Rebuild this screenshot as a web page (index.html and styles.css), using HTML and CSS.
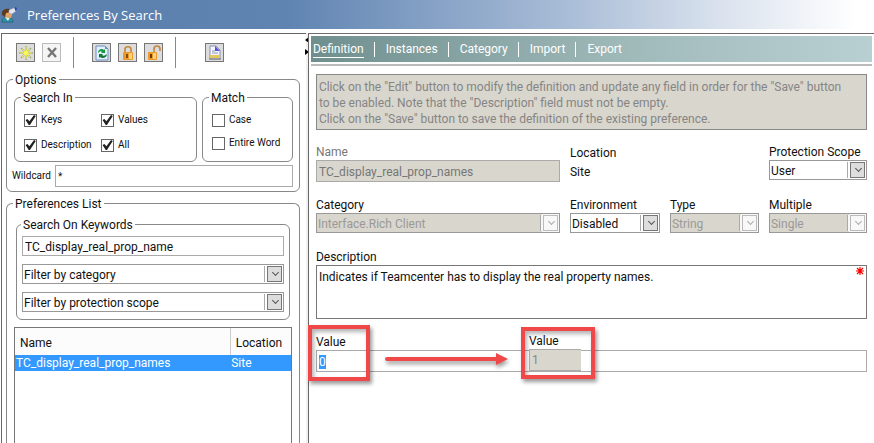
FILE: index.html
```html
<!DOCTYPE html>
<html lang="en">
<head>
    <meta charset="utf-8">
    <title>Preferences By Search</title>
    <link rel="stylesheet" href="styles.css">
</head>
<body>
    <header class="titlebar">
        <svg class="title-icon" width="16" height="16" viewBox="0 0 16 16">
            <path d="M1 15c0-4 2-5 5-5s6 1 6 5z" fill="#2c93a8" stroke="#1c5468" stroke-width=".6"/>
            <path d="M4 10l3 4 2-4z" fill="#e8f4f4"/>
            <path d="M3 5h7l1 3-1 3H6L3 8z" fill="#e0a565"/>
            <path d="M1 8c-1-5 3-7 8-6l1 3-5 1-1 4z" fill="#5d3a22"/>
            <path d="M8 3l5-2 2 3-4 3-3-1z" fill="#dfe6f2" stroke="#9aa9c4" stroke-width=".5"/>
            <path d="M14 0l2 1-1 3-1-1z" fill="#2b3cc0"/>
        </svg>
        <h1>Preferences By Search</h1>
    </header>

    <main class="workspace">
        <section class="sidebar">
            <div class="toolbar">
                <button class="tool" aria-label="New">
                    <svg width="16" height="16" viewBox="0 0 16 16">
                        <path d="M8 1v14M1 8h14M3 3l10 10M13 3L3 13" stroke="#a3ad78" stroke-width="1.5"/>
                        <path d="M8 2v12M2 8h12M4 4l8 8M12 4l-8 8" stroke="#f3ee3c" stroke-width="1"/>
                        <circle cx="8" cy="8" r="2.5" fill="#faf65a"/>
                    </svg>
                </button>
                <button class="tool off" aria-label="Delete" disabled>
                    <svg width="16" height="16" viewBox="0 0 16 16">
                        <path d="M4 3l8 9M12 3l-8 9" stroke="#777" stroke-width="2.4"/>
                    </svg>
                </button>
                <span class="sep"></span>
                <button class="tool" aria-label="Refresh">
                    <svg width="16" height="16" viewBox="0 0 16 16">
                        <path d="M2 1h9l3 3v11H2z" fill="#e4efff" stroke="#6d8fc6"/>
                        <path d="M11 1v3h3z" fill="#6d8fc6"/>
                        <path d="M4 8c0-4 4-5 6-3l1-1v4H7l1-1c-1-1-2-1-4 1z" fill="#169a3e"/>
                        <path d="M13 9c0 4-5 5-7 3l-1 1V9h4l-1 1c1 1 3 1 5-1z" fill="#107a30"/>
                    </svg>
                </button>
                <button class="tool" aria-label="Lock">
                    <svg width="16" height="16" viewBox="0 0 16 16">
                        <path d="M5 8V4c0-3 6-3 6 0v4" fill="none" stroke="#c4863a" stroke-width="1.6"/>
                        <rect x="3" y="7" width="10" height="8" rx="1" fill="#ee9a2a"/>
                        <path d="M9 8h3v6H9z" fill="#ffd27a"/>
                        <path d="M7 9v4" stroke="#5a3208" stroke-width="1.5"/>
                    </svg>
                </button>
                <button class="tool" aria-label="Unlock">
                    <svg width="16" height="16" viewBox="0 0 16 16">
                        <path d="M8 8V4c0-4 6-4 6 0v2" fill="none" stroke="#c4863a" stroke-width="1.6"/>
                        <rect x="2" y="7" width="9" height="8" rx="1" fill="#ee9a2a"/>
                        <path d="M7 8h3v6H7z" fill="#ffd27a"/>
                        <path d="M5 9v4" stroke="#5a3208" stroke-width="1.8"/>
                    </svg>
                </button>
                <span class="sep"></span>
                <button class="tool report" aria-label="Report">
                    <svg width="16" height="16" viewBox="0 0 16 16">
                        <path d="M3 1h6l4 4v9H3z" fill="#f4f6ff" stroke="#8490b8"/>
                        <path d="M8 1l5 5H8z" fill="#5a50d8"/>
                        <path d="M5 6h3M5 8h6" stroke="#9098b0"/>
                        <path d="M3 10h10v3H3z" fill="#e0c85c"/>
                        <path d="M2 14h12" stroke="#777"/>
                    </svg>
                </button>
            </div>

            <fieldset class="group options">
                <legend>Options</legend>
                <div class="option-groups">
                    <fieldset class="group search-in">
                        <legend>Search In</legend>
                        <label class="check"><input type="checkbox" checked>Keys</label>
                        <label class="check"><input type="checkbox" checked>Values</label>
                        <label class="check"><input type="checkbox" checked>Description</label>
                        <label class="check"><input type="checkbox" checked>All</label>
                    </fieldset>
                    <fieldset class="group match">
                        <legend>Match</legend>
                        <label class="check"><input type="checkbox">Case</label>
                        <label class="check"><input type="checkbox">Entire Word</label>
                    </fieldset>
                </div>
                <div class="wildcard">
                    <label for="wildcard">Wildcard</label>
                    <input type="text" class="box" id="wildcard" value="*">
                </div>
            </fieldset>

            <fieldset class="group list">
                <legend>Preferences List</legend>
                <fieldset class="group keywords">
                    <legend>Search On Keywords</legend>
                    <input type="text" class="box" aria-label="Search On Keywords" value="TC_display_real_prop_name">
                    <span class="select">
                        <select aria-label="Category filter"><option>Filter by category</option></select>
                    </span>
                    <span class="select">
                        <select aria-label="Protection scope filter"><option>Filter by protection scope</option></select>
                    </span>
                </fieldset>
                <div class="results">
                    <table>
                        <thead>
                            <tr><th class="col-name">Name</th><th>Location</th></tr>
                        </thead>
                        <tbody>
                            <tr class="selected"><td>TC_display_real_prop_names</td><td>Site</td></tr>
                        </tbody>
                    </table>
                </div>
            </fieldset>
        </section>

        <div class="splitter">
            <svg width="4" height="18" viewBox="0 0 4 18">
                <path d="M4 0v6L0 3zM0 12v6l4-3z" fill="#000"/>
            </svg>
        </div>

        <section class="detail">
            <nav class="tabs">
                <a href="#definition" class="active">Definition</a>
                <a href="#instances">Instances</a>
                <a href="#category">Category</a>
                <a href="#import">Import</a>
                <a href="#export">Export</a>
            </nav>
            <form class="form">
                <p class="info">Click on the "Edit" button to modify the definition and update any field in order for the "Save" button<br>to be enabled. Note that the "Description" field must not be empty.<br>Click on the "Save" button to save the definition of the existing preference.</p>

                <div class="fields">
                    <div class="field dim">
                        <label for="name">Name</label>
                        <input type="text" class="box" id="name" value="TC_display_real_prop_names" disabled>
                    </div>
                    <div class="field location">
                        <span>Location</span>
                        <span class="static">Site</span>
                    </div>
                    <div class="field scope">
                        <label for="scope">Protection Scope</label>
                        <span class="select"><select id="scope"><option>User</option></select></span>
                    </div>
                    <div class="field">
                        <label for="category">Category</label>
                        <span class="select off"><select id="category" disabled><option>Interface.Rich Client</option></select></span>
                    </div>
                    <div class="field">
                        <label for="environment">Environment</label>
                        <span class="select"><select id="environment"><option>Disabled</option></select></span>
                    </div>
                    <div class="field">
                        <label for="type">Type</label>
                        <span class="select off"><select id="type" disabled><option>String</option></select></span>
                    </div>
                    <div class="field">
                        <label for="multiple">Multiple</label>
                        <span class="select off"><select id="multiple" disabled><option>Single</option></select></span>
                    </div>
                </div>

                <div class="field description">
                    <label for="description">Description</label>
                    <textarea id="description">Indicates if Teamcenter has to display the real property names.</textarea>
                    <svg class="required" width="8" height="8" viewBox="0 0 8 8">
                        <path d="M4 0v8M0 4h8M1 1l6 6M7 1L1 7" stroke="#f00" stroke-width="1.2"/>
                    </svg>
                </div>

                <div class="field value">
                    <label for="value">Value</label>
                    <input type="text" class="box" id="value" value="0">
                    <div class="mark mark-old"></div>
                    <svg class="arrow" width="124" height="16" viewBox="0 0 124 16">
                        <path d="M2 8h112" stroke="#f04848" stroke-width="4" stroke-linecap="round"/>
                        <path d="M111 2l12 6-12 6z" fill="#f04848"/>
                    </svg>
                    <div class="mark mark-new">
                        <label for="new-value">Value</label>
                        <input type="text" id="new-value" value="1" disabled>
                    </div>
                </div>
            </form>
        </section>
    </main>

    <script>
        document.getElementById('value').select();
    </script>
</body>
</html>
```
FILE: styles.css
```css
* {
    box-sizing: border-box;
}
body {
    margin: 0;
    min-height: 100vh;
    display: flex;
    flex-direction: column;
    background: #fff;
    color: #111;
    font: 12px/16px Roboto, "Open Sans", sans-serif;
}
input, select, textarea, button {
    font: inherit;
    color: inherit;
    margin: 0;
    border-radius: 0;
    outline: none;
}

/* title bar */
.titlebar {
    display: flex;
    align-items: center;
    gap: 10px;
    height: 29px;
    margin-bottom: 4px;
    padding-left: 1px;
    background: linear-gradient(90deg, #5b7fac 0%, #6084b2 33%, #a9bdd7 65%, #dbe3ee 83%, #fff 98%);
}
.titlebar h1 {
    margin: 0;
    color: #fff;
    font-family: "Open Sans", sans-serif;
    font-size: 13px;
    font-weight: normal;
}

.workspace {
    flex: 1;
    display: grid;
    grid-template-columns: 35% 2px 1fr;
}

/* left side */
.sidebar {
    display: flex;
    flex-direction: column;
    margin-left: 1px;
    padding: 0 6px 0 4px;
    border-left: 1px solid #666;
    border-top: 1px solid #666;
}
.toolbar {
    display: flex;
    align-items: center;
    gap: 7px;
    height: 37px;
    padding-left: 10px;
}
.tool {
    width: 19px;
    height: 19px;
    padding: 0;
    border: 1px solid #777;
    background: #dcdcdc;
    display: flex;
    align-items: center;
    justify-content: center;
}
.tool.off {
    border-color: #bbb;
    background: #f5f5f5;
}
.tool.report {
    margin-left: 11px;
}
.sep {
    width: 1px;
    height: 31px;
    margin: 0 11px 0 5px;
    background: #888;
}
.group {
    min-width: 0;
    margin: 0;
    padding: 0;
    border: 1px solid #888;
    border-radius: 6px;
}
.group legend {
    margin-left: -1px;
    padding: 1px 2px 0;
}
.options {
    padding: 1px 6px 4px 7px;
}
.option-groups {
    display: grid;
    grid-template-columns: 183fr 91fr;
    gap: 5px;
}
.search-in, .match {
    height: 73px;
    display: grid;
    align-content: start;
    row-gap: 9px;
    padding: 6px 9px 0;
}
.match {
    row-gap: 7px;
}
.search-in {
    grid-template-columns: 77px 1fr;
}
.search-in legend, .match legend {
    margin-left: -3px;
}
.check {
    display: flex;
    align-items: center;
    gap: 4px;
    font-size: 10px;
    white-space: nowrap;
}
.check input {
    appearance: none;
    flex: none;
    width: 13px;
    height: 13px;
    border: 1px solid #666;
    background: #fff;
}
.check input:checked::after {
    content: "";
    display: block;
    width: 11px;
    height: 11px;
    background: #222;
    clip-path: polygon(5% 50%, 22% 40%, 40% 62%, 82% 5%, 98% 14%, 45% 95%, 34% 95%);
}
.box {
    width: 100%;
    height: 22px;
    padding: 1px 2px 0;
    border: 1px solid #aaa;
    background: #fff;
}
.wildcard {
    display: flex;
    align-items: center;
    gap: 4px;
    margin: 3px 0 0 -2px;
    font-size: 10px;
}
.list {
    flex: 1;
    display: flex;
    flex-direction: column;
    margin-top: 3px;
    padding: 4px 7px 0;
    border-bottom: 0;
    border-radius: 6px 6px 0 0;
}
.keywords {
    display: flex;
    flex-direction: column;
    gap: 8px;
    margin: 0 2px;
    padding: 3px 5px 7px;
}
.keywords .box, .keywords select {
    height: 20px;
}
.results {
    flex: 1;
    margin-top: 7px;
    border: 1px solid #777;
    border-bottom: 0;
}
.results table {
    width: 100%;
    border-collapse: collapse;
}
.results th {
    height: 27px;
    padding: 3px 5px 0;
    font-weight: normal;
    text-align: left;
    background: #fcfcfc;
}
.results th + th {
    border-left: 1px solid #ccc;
}
.results .col-name {
    width: 78%;
}
.results td {
    height: 16px;
    padding: 1px 1px 0;
    line-height: 15px;
}
.selected {
    background: #3399ff;
    color: #fff;
}

/* drop-downs */
.select {
    position: relative;
    display: block;
}
.select select {
    appearance: none;
    display: block;
    width: 100%;
    height: 20px;
    padding: 1px 18px 0 1px;
    border: 1px solid #999;
    background: #fff;
    opacity: 1;
}
.select::before {
    content: "";
    position: absolute;
    top: 2px;
    right: 2px;
    bottom: 2px;
    width: 13px;
    border: 1px solid #777;
    background: #ddd;
    box-shadow: -2px 0 #fff, -3px 0 #aaa;
    pointer-events: none;
}
.select::after {
    content: "";
    position: absolute;
    top: 6px;
    right: 6px;
    width: 4px;
    height: 4px;
    border: solid #555;
    border-width: 0 1px 1px 0;
    transform: rotate(45deg);
    pointer-events: none;
}
.select.off select {
    background: #d9d6cd;
    color: #999;
}
.select.off::before {
    background: #f8f8f8;
    border-color: #bbb;
    box-shadow: 0 0 0 1px #f8f8f8, -2px 0 #f8f8f8, -3px 0 #aaa;
}
.select.off::after {
    border-color: #aaa;
}

.splitter {
    background: #f0f0f0;
}
.splitter svg {
    display: block;
    margin: 4px 0 0 -1px;
}

/* right side */
.detail {
    min-width: 0;
    padding: 2px 2px 0;
    border-left: 1px solid #666;
    border-top: 1px solid #736b70;
}
.tabs {
    display: flex;
    align-items: center;
    height: 26px;
    padding: 1px 0 0 2px;
    background: linear-gradient(90deg, #6f8f8e, #9fb8b8 55%, #b9d0d3);
}
.tabs a {
    color: #fff;
    text-decoration: none;
    line-height: 15px;
}
.tabs a + a {
    margin-left: 10px;
    padding-left: 11px;
    border-left: 1px solid #fff;
}
.tabs .active {
    border-bottom: 1px solid #fff;
}
.form {
    margin-top: 2px;
    padding: 8px 5px 0;
    border-top: 2px solid #bbb;
}
.info {
    margin: 0;
    padding: 4px 2px 2px;
    border: 1px solid #888;
    background: #d9d6cd;
    color: #858585;
}
.fields {
    display: grid;
    grid-template-columns: 244fr 90fr 89fr 98fr;
    gap: 16px 10px;
    margin-top: 15px;
}
.field {
    display: flex;
    flex-direction: column;
    min-width: 0;
    white-space: nowrap;
}
.field label {
    line-height: 15px;
}
.dim {
    color: #777;
}
.field .box:disabled {
    background: #d9d6cd;
    color: #777;
}
.location {
    grid-column: span 2;
}
.static {
    margin-top: 3px;
}
.description {
    position: relative;
    margin-top: 17px;
}
.description textarea {
    height: 54px;
    padding: 3px 2px;
    border: 1px solid #777;
    resize: none;
}
.required {
    position: absolute;
    top: 17px;
    right: 3px;
}
.value {
    position: relative;
    margin-top: 16px;
}
.value ::selection {
    background: #3399ff;
    color: #fff;
}

/* callouts */
.mark {
    position: absolute;
    border: 4px solid #f04848;
    box-shadow: 2px 3px 4px rgba(0, 0, 0, 0.4), inset 2px 3px 4px rgba(0, 0, 0, 0.3);
    pointer-events: none;
}
.mark-old {
    left: -8px;
    top: -10px;
    width: 62px;
    height: 56px;
}
.mark-new {
    left: 205px;
    top: -8px;
    width: 74px;
    height: 52px;
    padding: 3px 4px;
}
.mark-new label {
    display: block;
}
.mark-new input {
    display: block;
    width: 52px;
    height: 22px;
    padding: 0 2px;
    border: 1px solid #aaa;
    border-right: 0;
    background: #d9d6cd;
    color: #888;
}
.arrow {
    position: absolute;
    left: 69px;
    top: 16px;
    filter: drop-shadow(1px 3px 2px rgba(0, 0, 0, 0.4));
}
```
